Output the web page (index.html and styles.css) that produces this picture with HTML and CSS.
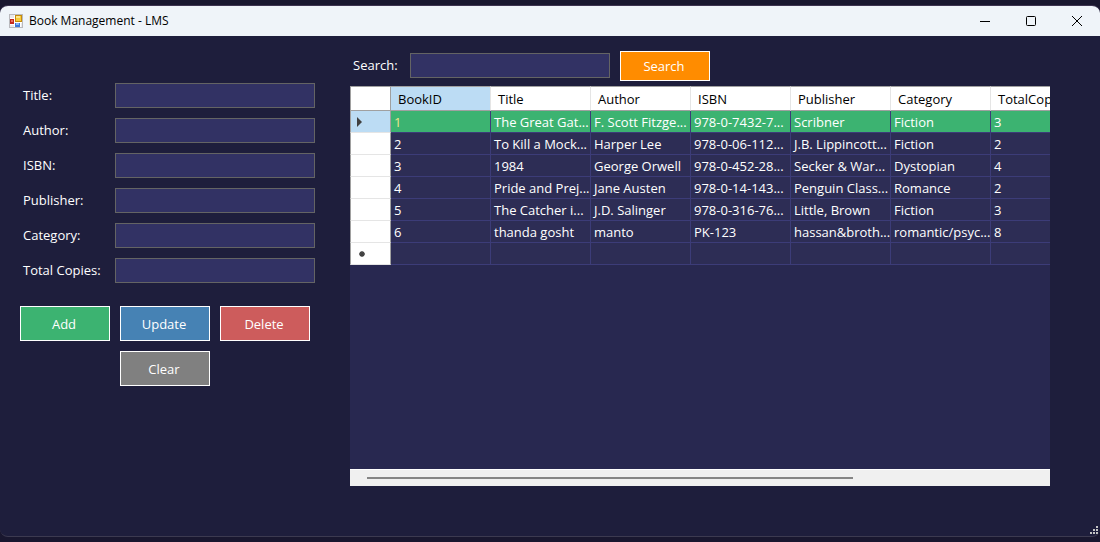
FILE: index.html
```html
<!DOCTYPE html>
<html lang="en">
<head>
<meta charset="utf-8">
<title>Book Management - LMS</title>
<link rel="stylesheet" href="styles.css">
</head>
<body>
<div class="window">
  <header class="titlebar">
    <svg class="app-icon" width="14" height="14" viewBox="0 0 14 14" aria-hidden="true">
      <rect x=".5" y=".5" width="13" height="13" fill="#e9e9ec" stroke="#b9b9bd"/>
      <path d="M5.5 1v12M1 4.5h4M1 10.5h4M5 8.5h8M11.5 9v4" stroke="#fff"/>
      <rect x="1" y="5" width="4" height="5" fill="#c3281c"/>
      <rect x="2" y="6" width="2" height="2" fill="#e8705f"/>
      <rect x="6.5" y="1.5" width="6" height="6" fill="#f8cc3c" stroke="#c58b0c"/>
      <rect x="7" y="2" width="4" height="2" fill="#fde68a"/>
      <rect x="6" y="9" width="5" height="4" fill="#3f78d8"/>
      <rect x="7" y="9" width="3" height="2" fill="#86b3f5"/>
    </svg>
    <h1 class="caption">Book Management - LMS</h1>
    <button class="win-btn" type="button" aria-label="Minimize"><svg width="12" height="12" viewBox="0 0 12 12"><path d="M1 6.5h10" stroke="#000" fill="none"/></svg></button>
    <button class="win-btn" type="button" aria-label="Maximize"><svg width="12" height="12" viewBox="0 0 12 12"><rect x="1.5" y="1.5" width="9" height="9" rx="1" stroke="#000" fill="none"/></svg></button>
    <button class="win-btn" type="button" aria-label="Close"><svg width="12" height="12" viewBox="0 0 12 12"><path d="M1 1l10 10M11 1L1 11" stroke="#000" fill="none"/></svg></button>
  </header>
  <main class="content">
    <form class="form">
      <div class="field"><label for="title">Title:</label><input class="box" id="title" type="text"></div>
      <div class="field"><label for="author">Author:</label><input class="box" id="author" type="text"></div>
      <div class="field"><label for="isbn">ISBN:</label><input class="box" id="isbn" type="text"></div>
      <div class="field"><label for="publisher">Publisher:</label><input class="box" id="publisher" type="text"></div>
      <div class="field"><label for="category">Category:</label><input class="box" id="category" type="text"></div>
      <div class="field"><label for="copies">Total Copies:</label><input class="box" id="copies" type="text"></div>
      <div class="actions">
        <button class="btn add" type="button">Add</button>
        <button class="btn update" type="button">Update</button>
        <button class="btn delete" type="button">Delete</button>
        <button class="btn clear" type="button">Clear</button>
      </div>
    </form>
    <section class="catalog">
      <div class="search">
        <label for="search">Search:</label>
        <input class="box" id="search" type="text">
        <button class="btn find" type="button">Search</button>
      </div>
      <div class="grid">
        <table class="books">
          <colgroup><col class="col-mark"><col><col><col><col><col><col><col></colgroup>
          <thead>
            <tr><th class="mark"></th><th class="current">BookID</th><th>Title</th><th>Author</th><th>ISBN</th><th>Publisher</th><th>Category</th><th>TotalCopies</th></tr>
          </thead>
          <tbody>
            <tr class="selected"><td class="mark"><svg width="8" height="12" viewBox="0 0 8 12"><path d="M1 1l5 5-5 5z" fill="#404040"/></svg></td><td class="key">1</td><td>The Great Gat...</td><td>F. Scott Fitzge...</td><td>978-0-7432-7...</td><td>Scribner</td><td>Fiction</td><td>3</td></tr>
            <tr><td class="mark"></td><td>2</td><td>To Kill a Mock...</td><td>Harper Lee</td><td>978-0-06-112...</td><td>J.B. Lippincott...</td><td>Fiction</td><td>2</td></tr>
            <tr><td class="mark"></td><td>3</td><td>1984</td><td>George Orwell</td><td>978-0-452-28...</td><td>Secker &amp; War...</td><td>Dystopian</td><td>4</td></tr>
            <tr><td class="mark"></td><td>4</td><td>Pride and Prej...</td><td>Jane Austen</td><td>978-0-14-143...</td><td>Penguin Class...</td><td>Romance</td><td>2</td></tr>
            <tr><td class="mark"></td><td>5</td><td>The Catcher i...</td><td>J.D. Salinger</td><td>978-0-316-76...</td><td>Little, Brown</td><td>Fiction</td><td>3</td></tr>
            <tr><td class="mark"></td><td>6</td><td>thanda gosht</td><td>manto</td><td>PK-123</td><td>hassan&amp;broth...</td><td>romantic/psyc...</td><td>8</td></tr>
            <tr><td class="mark new"><svg width="8" height="8" viewBox="0 0 8 8"><path d="M4 1v6M1 4h6M2 2l4 4M6 2L2 6" stroke="#404040" stroke-width="1.4" fill="none"/></svg></td><td></td><td></td><td></td><td></td><td></td><td></td><td></td></tr>
          </tbody>
        </table>
        <div class="scrollbar"><div class="thumb"></div></div>
      </div>
    </section>
  </main>
  <svg class="grip" width="8" height="8" viewBox="0 0 8 8" aria-hidden="true"><path d="M6 0h2v2H6zM3 3h2v2H3zM6 3h2v2H6zM0 6h2v2H0zM3 6h2v2H3zM6 6h2v2H6z" fill="#c4c4c4"/></svg>
</div>
</body>
</html>
```
FILE: styles.css
```css
* { box-sizing: border-box; }

body {
  margin: 0;
  min-height: 100vh;
  padding: 5px 0;
  display: flex;
  background: #19172f;
  color: #fff;
  font: 13px/20px "Open Sans", "Noto Sans", sans-serif;
}

button, input { font: inherit; color: inherit; }

.window {
  position: relative;
  flex: 1;
  min-width: 0;
  display: flex;
  flex-direction: column;
  background: #1e1e3c;
  border-top: 1px solid #3d3450;
  border-bottom: 1px solid #3c3a50;
  border-radius: 8px;
  overflow: hidden;
}

.titlebar {
  display: flex;
  align-items: center;
  height: 30px;
  padding-left: 9px;
  background: #eff4f9;
  color: #000;
}

.caption {
  flex: 1;
  margin: 0 0 0 6px;
  font-size: 12px;
  font-weight: 400;
}

.win-btn {
  display: flex;
  align-items: center;
  justify-content: center;
  width: 46px;
  height: 30px;
  padding: 0;
  border: 0;
  background: transparent;
}

.content {
  flex: 1;
  display: flex;
  gap: 35px;
  padding: 14px 50px 50px 20px;
}

.form {
  width: 295px;
  flex: none;
  padding-top: 33px;
  display: flex;
  flex-direction: column;
  gap: 10px;
}

.field {
  display: flex;
  align-items: flex-start;
  height: 25px;
}

.field label {
  width: 95px;
  padding: 2px 0 0 3px;
}

.box {
  flex: 1;
  min-width: 0;
  height: 25px;
  padding: 0 4px;
  border: 1px solid #646464;
  border-radius: 0;
  background: #323264;
}

.actions {
  display: grid;
  grid-template-columns: repeat(3, 90px);
  grid-auto-rows: 35px;
  gap: 10px;
  padding-top: 13px;
}

.btn {
  border: 1px solid #fff;
  border-radius: 0;
  padding: 0 2px 0 0;
}

.add { background: #3cb371; }
.update { background: #4682b4; }
.delete { background: #cd5c5c; }
.clear { grid-column: 2; background: #808080; }
.find { width: 90px; height: 30px; background: #ff8c00; }

.catalog {
  flex: 1;
  min-width: 0;
  display: flex;
  flex-direction: column;
  gap: 5px;
}

.search {
  display: flex;
  align-items: flex-start;
  height: 30px;
  margin-top: 1px;
}

.search label { width: 60px; padding: 4px 0 0 3px; }
.search .box { flex: 0 1 200px; margin: 2px 10px 0 0; }

.grid {
  flex: 1;
  display: flex;
  flex-direction: column;
  justify-content: space-between;
  overflow: hidden;
  background: #282850;
}

.books {
  width: 741px;
  table-layout: fixed;
  border-collapse: separate;
  border-spacing: 0;
}

.col-mark { width: 41px; }

.books th {
  height: 25px;
  padding: 0 7px;
  overflow: hidden;
  background: #fff;
  color: #000;
  border-top: 1px solid #a0a0a0;
  border-right: 1px solid #e5e5e5;
  border-bottom: 1px solid #a0a0a0;
  font-weight: 400;
  text-align: left;
}

.books .current { background: #bcdcf4; }

.books td {
  height: 22px;
  padding: 0 0 0 3px;
  line-height: 20px;
  overflow: hidden;
  white-space: nowrap;
  background: #2d2d55;
  border-right: 1px solid #3c3c78;
  border-bottom: 1px solid #3c3c78;
}

.books .selected td { background: #3cb371; }
.books .key { color: #f0e68c; }

.books .mark {
  padding: 0 0 0 5px;
  background: #fff;
  border-left: 1px solid #a0a0a0;
  border-right: 1px solid #a0a0a0;
}

.books td.mark { border-bottom-color: #e5e5e5; }
.books .selected .mark { background: #bcdcf4; }
.books .mark.new { padding-left: 7px; }
.mark svg { display: block; }

.scrollbar {
  height: 17px;
  padding: 7px 17px 0;
  background: #f0f0f0;
  border-top: 1px solid #fff;
}

.thumb {
  width: 73%;
  height: 2px;
  background: #858585;
}

.grip {
  position: absolute;
  right: 2px;
  bottom: 2px;
}
```
